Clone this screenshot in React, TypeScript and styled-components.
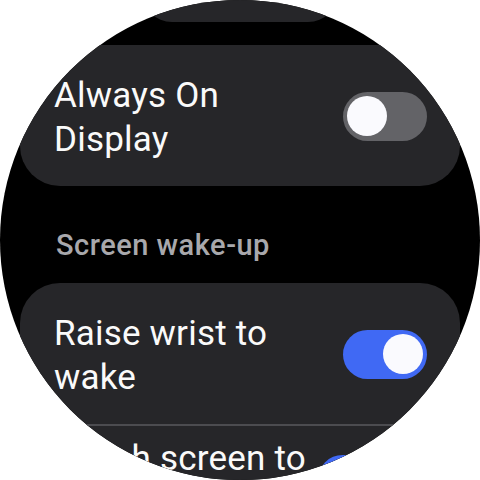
import React, { useState } from 'react';
import styled, { createGlobalStyle } from 'styled-components';

const GlobalStyle = createGlobalStyle`
	html, body {
		margin: 0;
		padding: 0;
		background: #ffffff;
	}
	body {
		font-family: Roboto, 'Noto Sans', sans-serif;
	}
`;

interface ToggleProps {
	on: boolean;
	onToggle: () => void;
}

const Toggle: React.FC<ToggleProps> = ({ on, onToggle }) => (
	<Track $on={on} onClick={onToggle} role="switch" aria-checked={on}>
		<Knob />
	</Track>
);

interface SettingRowProps {
	label: string;
	on: boolean;
	onToggle: () => void;
	$top?: number;
	$right?: number;
}

const SettingRow: React.FC<SettingRowProps> = ({ label, on, onToggle, $top = 25, $right = 33 }) => (
	<Row $top={$top} $right={$right}>
		<RowLabel>{label}</RowLabel>
		<Toggle on={on} onToggle={onToggle} />
	</Row>
);

const App: React.FC = () => {
	const [aod, setAod] = useState(false);
	const [raise, setRaise] = useState(true);
	const [touch, setTouch] = useState(true);

	return (
		<>
			<GlobalStyle />
			<Screen>
				<PeekCard />
				<Card $gap={23}>
					<SettingRow label="Always On Display" on={aod} onToggle={() => setAod(!aod)} />
				</Card>
				<SectionHeader>Screen wake-up</SectionHeader>
				<Card $gap={20}>
					<SettingRow label="Raise wrist to wake" on={raise} onToggle={() => setRaise(!raise)} />
					<Divider />
					<SettingRow label="Touch screen to wake" on={touch} onToggle={() => setTouch(!touch)} $top={7} $right={58} />
				</Card>
			</Screen>
		</>
	);
};

const Screen = styled.div`
	width: 480px;
	height: 480px;
	border-radius: 50%;
	overflow: hidden;
	background: #000000;
	display: flex;
	flex-direction: column;
	align-items: center;
`;

const PeekCard = styled.div`
	flex: none;
	width: 196px;
	height: 60px;
	margin-top: -38px;
	border-radius: 40px;
	background: #262629;
`;

const Card = styled.div<{ $gap: number }>`
	flex: none;
	width: 440px;
	margin-top: ${p => p.$gap}px;
	border-radius: 40px;
	background: #262629;
	display: flex;
	flex-direction: column;
`;

const Row = styled.div<{ $top: number; $right: number }>`
	display: flex;
	align-items: center;
	justify-content: space-between;
	padding: ${p => p.$top}px ${p => p.$right}px 24px 34px;
`;

const RowLabel = styled.div`
	width: 268px;
	padding-top: 4px;
	color: #fafafa;
	font-family: Roboto, 'Noto Sans', sans-serif;
	font-size: 35px;
	letter-spacing: 0.2px;
	line-height: 44px;
	font-weight: 400;
`;

const Divider = styled.div`
	height: 2px;
	background: #4c4c50;
	margin: 0 20px;
`;

const SectionHeader = styled.div`
	flex: none;
	width: 440px;
	box-sizing: border-box;
	padding: 41px 0 0 36px;
	color: #a8a8ac;
	font-family: Roboto, 'Noto Sans', sans-serif;
	font-size: 29px;
	letter-spacing: 0.5px;
	line-height: 36px;
	font-weight: 500;
`;

const Track = styled.div<{ $on: boolean }>`
	flex: none;
	width: 84px;
	height: 49px;
	box-sizing: border-box;
	padding: 0 4px;
	border-radius: 25px;
	background: ${p => (p.$on ? '#4069f4' : '#636367')};
	display: flex;
	align-items: center;
	justify-content: ${p => (p.$on ? 'flex-end' : 'flex-start')};
	cursor: pointer;
`;

const Knob = styled.div`
	width: 40px;
	height: 40px;
	border-radius: 50%;
	background: #fafafe;
`;

export default App;
